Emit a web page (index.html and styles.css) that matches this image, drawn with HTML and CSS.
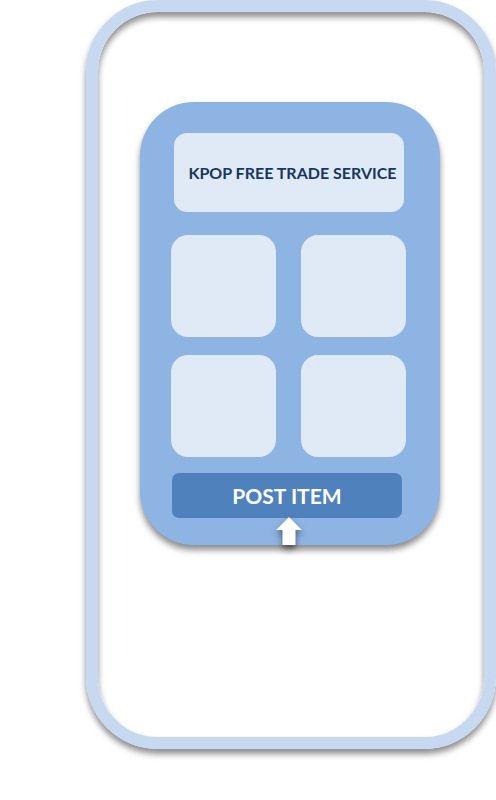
FILE: index.html
```html
<!DOCTYPE html>
<html lang="en">
<head>
<meta charset="utf-8">
<meta name="viewport" content="width=device-width, initial-scale=1">
<title>KPOP Free Trade Service</title>
<link rel="stylesheet" href="styles.css">
</head>
<body>
<main class="phone">
  <section class="card">
    <h1 class="title">KPOP FREE TRADE SERVICE</h1>
    <div class="tiles">
      <div class="tile"></div>
      <div class="tile"></div>
      <div class="tile"></div>
      <div class="tile"></div>
    </div>
    <button class="post" type="button">POST ITEM</button>
    <svg class="arrow" viewBox="0 0 26 28" aria-hidden="true"><path d="M13 0 26 13H19.500V28H6.500V13H0Z" fill="#fff"/></svg>
  </section>
</main>
</body>
</html>
```
FILE: styles.css
```css
* {
  box-sizing: border-box;
}

body {
  margin: 0;
  background: #fff;
  font-family: Lato, "Liberation Sans", sans-serif;
  overflow-x: hidden;
}

.phone {
  margin: 0 0 40px 86px;
  padding: 90px 44px 192px 42px;
  border: 12px solid #c6d9f1;
  border-radius: 72px;
  box-shadow: 0 5px 6px rgba(0, 0, 0, 0.45), inset 0 5px 6px rgba(0, 0, 0, 0.45);
}

.card {
  position: relative;
  padding: 31px 34px 27px 31px;
  border-radius: 54px;
  background: #8eb4e3;
  box-shadow: 0 5px 6px rgba(0, 0, 0, 0.45);
}

.title {
  margin: 0 2px 23px 3px;
  padding: 30px 0 29px 7px;
  border-radius: 13px;
  background: #e0eaf6;
  color: #17375e;
  font-size: 16px;
  line-height: 20px;
  font-weight: 700;
  text-align: center;
  white-space: nowrap;
}

.tiles {
  display: grid;
  grid-template-columns: 1fr 1fr;
  gap: 18px 25px;
  margin-bottom: 16px;
}

.tile {
  height: 102px;
  border-radius: 17px;
  background: #e0eaf6;
}

.post {
  display: block;
  width: calc(100% - 5px);
  height: 45px;
  margin: 0 4px 0 1px;
  padding: 0 0 1px;
  border: 0;
  border-radius: 7px;
  background: #4f81bd;
  color: #fff;
  font: inherit;
  font-size: 21px;
  font-weight: 700;
}

.arrow {
  position: absolute;
  bottom: 0;
  left: calc(50% - 14px);
  width: 26px;
  height: 28px;
  overflow: visible;
  filter: drop-shadow(0 4px 3px rgba(0, 0, 0, 0.5));
}
```
